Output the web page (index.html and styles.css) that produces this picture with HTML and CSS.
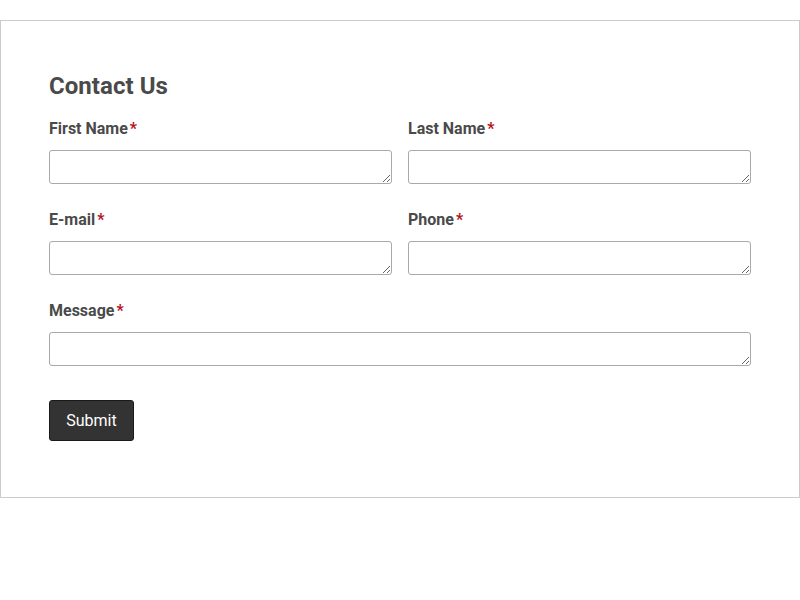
FILE: index.html
```html
<!DOCTYPE html>
<html>
<head>
<meta charset="utf-8">
<link rel="stylesheet" href="styles.css">
</head>
<body>
<form class="contact">
  <h2 class="title">Contact Us</h2>
  <div class="grid">
    <div class="field">
      <label class="label">First Name<span class="req">*</span></label>
      <textarea class="input"></textarea>
    </div>
    <div class="field">
      <label class="label">Last Name<span class="req">*</span></label>
      <textarea class="input"></textarea>
    </div>
    <div class="field">
      <label class="label">E-mail<span class="req">*</span></label>
      <textarea class="input"></textarea>
    </div>
    <div class="field">
      <label class="label">Phone<span class="req">*</span></label>
      <textarea class="input"></textarea>
    </div>
    <div class="field full">
      <label class="label">Message<span class="req">*</span></label>
      <textarea class="input"></textarea>
    </div>
  </div>
  <button type="button" class="submit">Submit</button>
</form>
</body>
</html>
```

FILE: styles.css
```css
html, body {
  margin: 0;
  padding: 0;
  background: #fff;
}
body {
  padding-top: 20px;
  font-family: Roboto, "Liberation Sans", sans-serif;
  color: #4a4a4a;
}
.contact {
  border: 1px solid #cccccc;
  padding: 50px 48px 56px;
  display: flex;
  flex-direction: column;
  align-items: flex-start;
}
.title {
  margin: 0 0 17px;
  font-size: 24px;
  line-height: 30px;
  font-weight: 700;
  color: #4a4a4a;
  letter-spacing: 0.05px;
}
.grid {
  align-self: stretch;
  display: grid;
  grid-template-columns: 1fr 1fr;
  column-gap: 16px;
  row-gap: 25px;
}
.field {
  display: flex;
  flex-direction: column;
}
.full {
  grid-column: 1 / 3;
}
.label {
  font-size: 16px;
  line-height: 20px;
  font-weight: 700;
  padding-top: 1px;
  margin-bottom: 11px;
  color: #4a4a4a;
}
.req {
  color: #b5121b;
  margin-left: 2px;
}
.input {
  box-sizing: border-box;
  height: 34px;
  width: 100%;
  margin: 0;
  border: 1px solid #a9a9a9;
  border-radius: 3px;
  background: #fff;
  resize: vertical;
  font-family: Roboto, "Liberation Sans", sans-serif;
  font-size: 14px;
  padding: 6px 8px;
}
.submit {
  margin-top: 34px;
  box-sizing: border-box;
  width: 85px;
  height: 41px;
  background: #333333;
  color: #ffffff;
  border: 1px solid #1a1a1a;
  border-radius: 3px;
  padding: 0;
  text-align: center;
  font-family: Roboto, "Liberation Sans", sans-serif;
  font-size: 16px;
  line-height: 19px;
  font-weight: 400;
}
```
